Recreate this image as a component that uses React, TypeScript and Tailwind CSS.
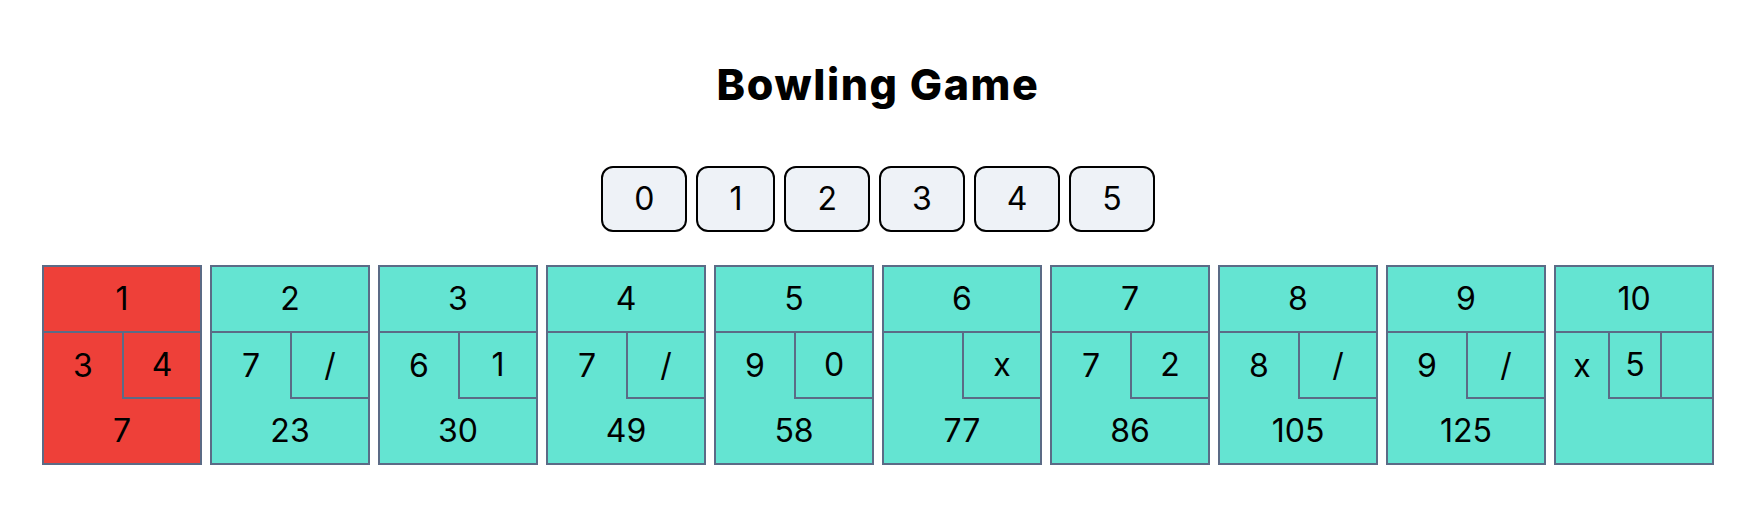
import React from "react";

type Frame = { n: number; a: string; b: string; c?: string; total: string; red?: boolean };

const frames: Frame[] = [
  { n: 1, a: "3", b: "4", total: "7", red: true },
  { n: 2, a: "7", b: "/", total: "23" },
  { n: 3, a: "6", b: "1", total: "30" },
  { n: 4, a: "7", b: "/", total: "49" },
  { n: 5, a: "9", b: "0", total: "58" },
  { n: 6, a: "", b: "x", total: "77" },
  { n: 7, a: "7", b: "2", total: "86" },
  { n: 8, a: "8", b: "/", total: "105" },
  { n: 9, a: "9", b: "/", total: "125" },
  { n: 10, a: "x", b: "5", c: "", total: "" },
];

function FrameBox({ f }: { f: Frame }) {
  const tenth = f.c !== undefined;
  return (
    <div
      className={`w-[160px] h-[200px] border-2 border-[#5b6b86] flex flex-col ${
        f.red ? "bg-[#ee4039]" : "bg-[#64e4d2]"
      }`}
    >
      <div className="h-[66px] border-b-2 border-[#5b6b86] flex items-center justify-center">{f.n}</div>
      {tenth ? (
        <div className="h-[66px] flex">
          <div className="w-[52px] flex items-center justify-center">{f.a}</div>
          <div className="w-[52px] border-l-2 border-b-2 border-[#5b6b86] flex items-center justify-center">{f.b}</div>
          <div className="w-[52px] border-l-2 border-b-2 border-[#5b6b86] flex items-center justify-center">{f.c}</div>
        </div>
      ) : (
        <div className="h-[66px] flex">
          <div className="w-[78px] flex items-center justify-center">{f.a}</div>
          <div className="w-[78px] border-l-2 border-b-2 border-[#5b6b86] flex items-center justify-center">{f.b}</div>
        </div>
      )}
      <div className="flex-1 flex items-center justify-center">{f.total}</div>
    </div>
  );
}

export default function App() {
  return (
    <div className="w-full min-h-[528px] bg-white font-['Inter',sans-serif] text-black flex flex-col items-center">
      <h1 className="mt-[59px] h-[51px] leading-[51px] text-[43px] font-extrabold tracking-[1.6px]">Bowling Game</h1>
      <div className="mt-[56px] flex gap-[9px]">
        {[0, 1, 2, 3, 4, 5].map((d) => (
          <button
            key={d}
            className="h-[66px] px-[31px] rounded-[12px] border-2 border-black bg-[#eef2f7] text-[32px] leading-none flex items-center justify-center"
          >
            {d}
          </button>
        ))}
      </div>
      <div className="mt-[33px] flex gap-2 text-[32px] leading-none">
        {frames.map((f) => (
          <FrameBox key={f.n} f={f} />
        ))}
      </div>
    </div>
  );
}
